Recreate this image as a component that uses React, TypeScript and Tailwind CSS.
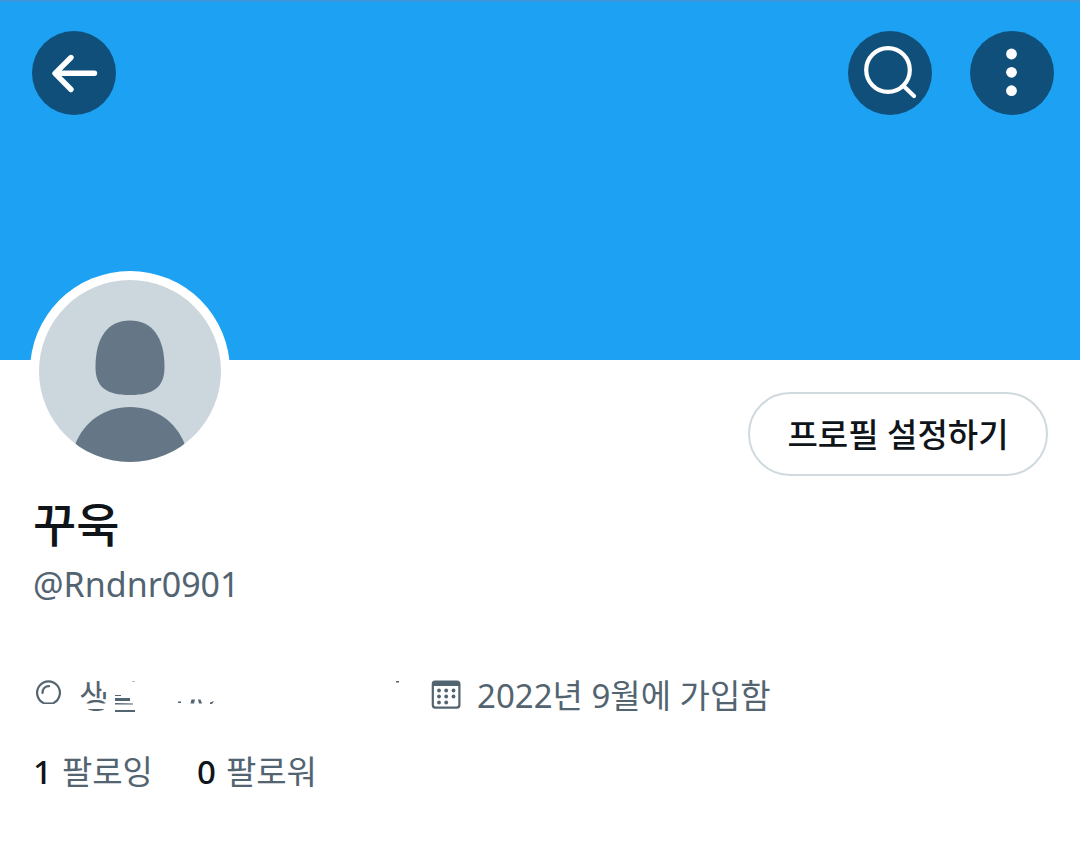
import type { ReactNode } from 'react';

const HeaderButton = ({
  label,
  children,
}: {
  label: string;
  children: ReactNode;
}) => (
  <button
    type="button"
    aria-label={label}
    className="flex size-[84px] items-center justify-center rounded-full bg-[#0f4f7a] text-white"
  >
    {children}
  </button>
);

const BackIcon = () => (
  <svg viewBox="0 0 84 84" className="size-full" fill="none" stroke="currentColor" strokeWidth="5.4" strokeLinecap="round" strokeLinejoin="round">
    <path d="M39 26.5 L23 42.3 L39 58.5 M24 42.3 H62.5" />
  </svg>
);

const SearchIcon = () => (
  <svg viewBox="0 0 84 84" className="size-full" fill="none" stroke="currentColor" strokeWidth="4.2" strokeLinecap="round">
    <circle cx="40" cy="39" r="21.8" />
    <path d="M55.5 55 L66 65" />
  </svg>
);

const MoreIcon = () => (
  <svg viewBox="0 0 84 84" className="size-full" fill="currentColor">
    <circle cx="41.5" cy="23" r="5.4" />
    <circle cx="41.5" cy="41.3" r="5.4" />
    <circle cx="41.5" cy="59.7" r="5.4" />
  </svg>
);

const Avatar = () => (
  <svg viewBox="0 0 182 182" className="size-full rounded-full bg-[#ccd6dd]" role="img" aria-label="프로필 사진">
    <path
      fill="#657786"
      d="M91 40.5 C113 40.5 125.5 57 125.5 87 C125.5 107 115 115 91 115 C67 115 56.5 107 56.5 87 C56.5 57 69 40.5 91 40.5 Z"
    />
    <path fill="#657786" d="M36 165 C45 141 66 127 91 127 C116 127 137 141 146 165 V182 H36 Z" />
  </svg>
);

const BirthdayIcon = () => (
  <svg viewBox="0 0 30 30" className="size-[30px]" fill="none" stroke="currentColor">
    <path strokeWidth="2.2" d="M9.5 24 A11.4 11.4 0 1 1 19.5 24" />
    <path strokeWidth="1.6" d="M9 24.2 H20" />
    <path strokeWidth="2.2" strokeLinecap="round" d="M8.5 14 C8.5 10 11 7.2 15 7.2" />
  </svg>
);

const CalendarIcon = () => (
  <svg viewBox="0 0 30 30" className="size-[30px]" fill="currentColor">
    <path
      fillRule="evenodd"
      d="M4 0.5 H26 Q29.5 0.5 29.5 4 V25 Q29.5 28.7 26 28.7 H4 Q0.7 28.7 0.7 25 V4 Q0.7 0.5 4 0.5 Z M2.9 6 V24.8 Q2.9 26.6 4.7 26.6 H25.5 Q27.3 26.6 27.3 24.8 V6 Z"
    />
    <circle cx="8" cy="10.5" r="1.9" />
    <circle cx="15.2" cy="10.5" r="1.9" />
    <circle cx="22.5" cy="10.5" r="1.9" />
    <circle cx="8" cy="16.5" r="1.9" />
    <circle cx="15.2" cy="16.5" r="1.9" />
    <circle cx="22.5" cy="16.5" r="1.9" />
    <circle cx="8" cy="22.5" r="1.9" />
    <circle cx="15.2" cy="22.5" r="1.9" />
  </svg>
);

// 생일은 대부분 지워진 상태로 표시
const HiddenBirthday = () => (
  <span className="relative block w-[341px]">
    생
    <svg viewBox="0 0 341 48" className="absolute top-0 left-0 h-[48px] w-[341px]">
      <path fill="#fff" d="M22.5 0 H40 V20 H22.5 Z M0 31.5 H40 V37 H0 Z M0 40 H40 V48 H0 Z" />
      <g fill="#536471">
        <path d="M36 23 H42 V24 H36 Z M36 26 H51 V29 H36 Z M36 31 L54 31.5 V32.5 H36 Z M36 38 H56 V40 H36 Z" />
        <path d="M99 29.5 H102 V31 H99 Z M112.5 27.5 H116 L115 31.5 H111.5 Z M119 27.5 H121.5 L123 31.5 H120 Z M135 29 L133 32 H131 V30.5 Z" />
        <path d="M317 9 H320 V10.5 H317 Z" />
        <path opacity="0.4" d="M53 9 H56 V10 H53 Z" />
      </g>
    </svg>
  </span>
);

const follows = [
  { count: 1, label: '팔로잉' },
  { count: 0, label: '팔로워' },
];

export default function App() {
  return (
    <div className="min-h-screen bg-white font-['Noto_Sans','Noto_Sans_CJK_KR',sans-serif] text-[#536471]">
      <header className="h-[360px] border-t-2 border-[#3c96dc] bg-[#1da1f2] pt-[29px] pr-[26px] pl-8">
        <div className="flex items-center justify-between">
          <HeaderButton label="뒤로">
            <BackIcon />
          </HeaderButton>
          <div className="flex gap-[38px]">
            <HeaderButton label="검색">
              <SearchIcon />
            </HeaderButton>
            <HeaderButton label="더 보기">
              <MoreIcon />
            </HeaderButton>
          </div>
        </div>
      </header>

      <main className="pr-8 pl-[33px]">
        <div className="flex items-start justify-between">
          <div className="-mt-[89px] -ml-[3px] size-[200px] rounded-full bg-white p-[9px]">
            <Avatar />
          </div>
          <button
            type="button"
            className="mt-8 h-[84px] w-[300px] rounded-full border-2 border-[#cfd9de] pt-0.5 text-[33px] font-medium text-[#0f1419]"
          >
            프로필 설정하기
          </button>
        </div>

        <h1 className="mt-4 text-[47px] leading-[64px] font-medium text-[#0f1419]">꾸욱</h1>
        <p className="mt-1 text-[34px] leading-[48px]">@Rndnr0901</p>

        <div className="mt-16 flex items-start text-[33px] leading-[48px]">
          <div className="flex items-start gap-[15px] pl-px">
            <span className="pt-[7px]">
              <BirthdayIcon />
            </span>
            <HiddenBirthday />
          </div>
          <div className="flex items-start gap-4 pl-[11px]">
            <span className="pt-2">
              <CalendarIcon />
            </span>
            <span>2022년 9월에 가입함</span>
          </div>
        </div>

        <nav className="mt-7 flex gap-11 text-[33px] leading-[48px]">
          {follows.map(({ count, label }) => (
            <a key={label} href="#" className="flex gap-2.5">
              <span className="font-medium text-[#0f1419]">{count}</span>
              <span>{label}</span>
            </a>
          ))}
        </nav>
      </main>
    </div>
  );
}
